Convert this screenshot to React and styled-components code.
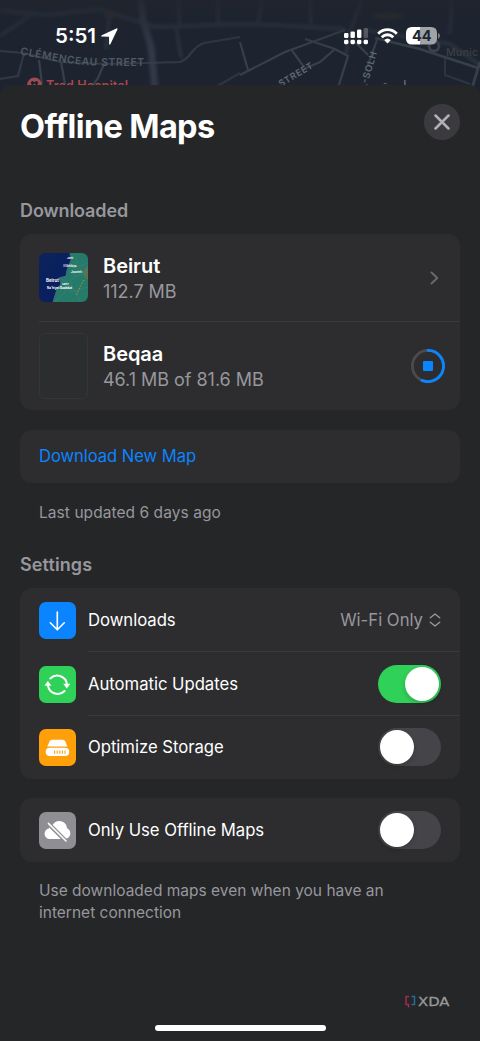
import React, { useState } from 'react'
import styled, { createGlobalStyle } from 'styled-components'

const GlobalStyle = createGlobalStyle`
    * { box-sizing: border-box; }
    body {
        margin: 0;
        background-color: #1d2430;
        font-family: Inter, "Liberation Sans", sans-serif;
        color: #fff;
    }
    svg { display: block; flex-shrink: 0; }
`
const Phone = styled.div`
    display: flex;
    flex-direction: column;
    position: relative;
    width: 480px;
    height: 1041px;
    overflow: hidden;
`
const MapBackground = styled.svg`
    position: absolute;
    top: 0;
    left: 0;
`
const StatusBar = styled.div`
    display: flex;
    position: relative;
    align-items: center;
    justify-content: space-between;
    height: 85px;
    padding: 0 40px 13px 55px;
`
const StatusGroup = styled.div`
    display: flex;
    align-items: center;
    gap: ${(props) => props.$gap}px;
`
const Time = styled.span`
    font-size: 20.5px;
    font-weight: 600;
    line-height: 24px;
    width: 42px;
    white-space: nowrap;
`
const Sheet = styled.div`
    display: flex;
    flex: 1;
    position: relative;
    flex-direction: column;
    padding: 19px 20px 10px;
    background-color: #252628;
    border-radius: 11px 11px 0 0;
`
const Header = styled.div`
    display: flex;
    justify-content: space-between;
    height: 95px;
`
const Title = styled.h1`
    margin: 2px 0 0;
    font-size: 32.5px;
    font-weight: 700;
    line-height: 42px;
    letter-spacing: -0.65px;
`
const CloseButton = styled.button`
    display: flex;
    align-items: center;
    justify-content: center;
    width: 36px;
    height: 36px;
    padding: 0;
    border: none;
    border-radius: 50%;
    background-color: #3b3b3f;
`
const SectionTitle = styled.h2`
    margin: ${(props) => props.$top || 0}px 0 0;
    font-size: 18px;
    font-weight: 600;
    line-height: 24px;
    letter-spacing: ${(props) => props.$spacing}px;
    color: #97979d;
`
const Card = styled.div`
    display: flex;
    flex-direction: column;
    margin-top: ${(props) => props.$top}px;
    padding-left: 19px;
    border-radius: 12px;
    background-color: #2d2d2f;
`
const MapRow = styled.div`
    display: flex;
    align-items: center;
    height: 88px;
    padding-right: ${(props) => props.$right}px;
    border-bottom: ${(props) => (props.$last ? 'none' : '1px solid #39393b')};
`
const EmptyThumb = styled.div`
    width: 49px;
    height: 66px;
    border: 1px solid #333537;
    border-radius: 6px;
    background-color: #2b2d2e;
`
const MapInfo = styled.div`
    flex: 1;
    margin-left: 15px;
    padding-top: 1px;
`
const MapName = styled.div`
    font-size: 20px;
    font-weight: 600;
    line-height: 26px;
    letter-spacing: -0.05px;
`
const MapSize = styled.div`
    font-size: 18px;
    line-height: 25px;
    letter-spacing: -0.03px;
    color: #97979d;
`
const LinkButton = styled.button`
    height: 53px;
    padding: 0 0 2px;
    border: none;
    background: none;
    font-family: inherit;
    font-size: 16.6px;
    letter-spacing: -0.05px;
    text-align: left;
    color: #0a84ff;
`
const Note = styled.p`
    margin: ${(props) => props.$margin};
    font-size: 15.5px;
    line-height: 22px;
    letter-spacing: ${(props) => props.$spacing}px;
    white-space: pre-line;
    color: #97979d;
`
const SettingRow = styled.div`
    display: flex;
    align-items: center;
    height: 64px;
    margin-bottom: ${(props) => (props.$tight ? -1 : 0)}px;
`
const IconBox = styled.div`
    display: flex;
    align-items: center;
    justify-content: center;
    width: 37px;
    height: 37px;
    border-radius: 7px;
    background-color: ${(props) => props.$color};
`
const SettingBody = styled.div`
    display: flex;
    flex: 1;
    align-items: center;
    justify-content: space-between;
    height: 100%;
    margin-left: 12px;
    padding-right: 19px;
    border-bottom: ${(props) => (props.$last ? 'none' : '1px solid #39393b')};
`
const SettingName = styled.span`
    font-size: 16.7px;
    letter-spacing: -0.03px;
`
const Picker = styled.span`
    display: flex;
    align-items: center;
    gap: 6px;
    font-size: 16.7px;
    color: #97979d;
`
const Switch = styled.button`
    display: flex;
    align-items: center;
    justify-content: ${(props) => (props.$on ? 'flex-end' : 'flex-start')};
    width: 63px;
    height: 38px;
    padding: 0 2px;
    border: none;
    border-radius: 19px;
    background-color: ${(props) => (props.$on ? '#30d158' : '#454549')};
`
const Knob = styled.span`
    width: 34px;
    height: 34px;
    border-radius: 50%;
    background-color: #fff;
    box-shadow: 0 2px 5px rgba(0, 0, 0, 0.2);
`
const Footer = styled.div`
    display: flex;
    flex-direction: column;
    align-items: center;
    margin-top: auto;
`
const Brand = styled.div`
    align-self: flex-end;
    height: 16px;
    margin: 0 10px 16px 0;
`
const HomeIndicator = styled.div`
    width: 171px;
    height: 6px;
    border-radius: 3px;
    background-color: #fff;
`

const StreetMap = () => (
    <MapBackground width="480" height="100" viewBox="0 0 480 100">
        <defs>
            <filter id="soft"><feGaussianBlur stdDeviation="1.6" /></filter>
            <filter id="softer"><feGaussianBlur stdDeviation="0.5" /></filter>
            <linearGradient id="shade" x1="0" y1="0" x2="0" y2="1">
                <stop offset="0" stopColor="#20242c" stopOpacity="0.75" />
                <stop offset="0.5" stopColor="#1d2430" stopOpacity="0" />
            </linearGradient>
        </defs>
        <rect width="480" height="100" fill="#1d2430" />
        <g fill="none" stroke="#2c3541" strokeWidth="3" filter="url(#soft)">
            <path d="M0 10L45 15L100 9L140 22L155 27L240 24L275 25L345 29" strokeWidth="4" />
            <path d="M141 0L143 20L151 47L155 90" strokeWidth="7" stroke="#303946" />
            <path d="M156 27L176 26L181 58" />
            <path d="M0 36L35 12M218 0V26M178 0L180 28M262 0L258 23M310 0L311 24M362 0L351 29" />
            <path d="M110 10L106 49M366 30L450 44L480 65M350 29L346 55M452 0L450 34" />
        </g>
        <g fill="none" stroke="#36404c" strokeWidth="2.2" filter="url(#softer)">
            <path d="M0 51L24 53L18 76L0 79M24 53L60 62L105 64L145 63L180 62C192 58 190 48 204 43L240 37" opacity="0.75" />
            <path d="M39 60L42 84M61 62L65 84M104 64L98 78L91 88" />
            <path d="M240 75L285 52L345 30M291 49L304 67M304 69L320 62L335 49L348 56L338 88M335 49L305 39" />
            <path d="M240 42L248 70M354 41L368 55M378 37L368 65" />
            <path d="M375 38L420 49L478 68M480 62L472 88" strokeWidth="2.8" />
            <path d="M214 88L240 73M445 57V75L470 84" opacity="0.6" />
        </g>
        <g fontFamily="Inter, sans-serif" fontWeight="600">
            <path id="clemenceau" d="M20 54.5C48 59 70 65.5 100 65.5H150" fill="none" />
            <text fill="#505a66" fontSize="10.3">
                <textPath href="#clemenceau" textLength="125">CLÉMENCEAU STREET</textPath>
            </text>
            <text x="281" y="87" transform="rotate(-31 281 87)" fill="#606a75" fontSize="9" textLength="38">STREET</text>
            <text x="366" y="89" transform="rotate(-73 366 89)" fill="#606a75" fontSize="9.5" textLength="38">L-SOLH</text>
            <circle cx="34.5" cy="85" r="7.5" fill="#a14a4d" />
            <path d="M31 83H38M32.5 81V86M36.5 81V86" stroke="#1d2430" strokeWidth="1.8" />
            <text x="46" y="90" fill="#ad464a" fontSize="12.5" textLength="82">Trad Hospital</text>
            <g fill="#727983" fontSize="13" fontFamily="DejaVu Sans">
                <text x="382" y="90">ة</text>
                <text x="403" y="90" fontWeight="400">ا</text>
            </g>
            <circle cx="434" cy="46" r="5" fill="none" stroke="#3b424c" strokeWidth="3" />
            <text x="446" y="56" fill="#3b3d41" fontSize="10.5" textLength="32">Munic</text>
        </g>
        <ellipse cx="388" cy="16" rx="15" ry="3.5" fill="#2f2d2f" filter="url(#soft)" />
        <ellipse cx="110" cy="15" rx="6" ry="4" fill="#352d2e" filter="url(#soft)" />
        <rect width="480" height="100" fill="url(#shade)" />
    </MapBackground>
)

const LocationIcon = () => (
    <svg width="17" height="17" viewBox="0 0 17 17">
        <path d="M15.4.4L.8 7.2C-.3 7.7 0 8.6.9 8.6L8 8.7L8.1 15.8C8.1 16.8 9.1 17 9.5 16.1L16.4 1.5C16.8.6 16.2 0 15.4.4Z" fill="#fff" />
    </svg>
)

const SignalIcon = () => (
    <svg width="24" height="18" viewBox="0 0 24 18" fill="#fff">
        <rect x="0" y="6" width="4.4" height="5" rx="1.2" />
        <rect x="6.5" y="4.5" width="4.4" height="6.5" rx="1.2" />
        <rect x="13" y="2.5" width="4.4" height="8.5" rx="1.2" />
        <rect x="19.6" y="1" width="4.4" height="10" rx="1.2" opacity="0.23" />
        {[0, 6.5, 13, 19.6].map((x) => <rect key={x} x={x} y="12.8" width="4.4" height="4.4" rx="1.4" />)}
    </svg>
)

const WifiIcon = () => (
    <svg width="21" height="16" viewBox="0 0 21 16" fill="none" stroke="#fff" strokeWidth="2.8">
        <path d="M1.2 5.7C6.4.3 14.6.3 19.8 5.7" />
        <path d="M4.7 9.2C8 5.9 13 5.9 16.3 9.2" />
        <path d="M7.2 12.1Q10.5 9.1 13.8 12.1L10.5 15.4Z" fill="#fff" stroke="none" />
    </svg>
)

const BatteryIcon = () => (
    <svg width="34" height="18" viewBox="0 0 34 18">
        <path d="M6 0H14V17.5H6Q0 17.5 0 11.5V6Q0 0 6 0Z" fill="#fff" />
        <path d="M14 0H25Q31 0 31 6V11.5Q31 17.5 25 17.5H14Z" fill="#a1a3a6" />
        <path d="M32 6Q34 6.5 34 8.8Q34 11 32 11.8Z" fill="#7d8186" />
        <text x="15.8" y="14" textAnchor="middle" fontFamily="Inter, sans-serif" fontSize="14.5" fontWeight="700" fill="#202631">44</text>
    </svg>
)

const BeirutThumb = () => (
    <svg width="49" height="49" viewBox="0 0 49 49">
        <defs>
            <clipPath id="thumb"><rect width="49" height="49" rx="6" /></clipPath>
            <linearGradient id="sea" x1="0" y1="0" x2="1" y2="1">
                <stop offset="0" stopColor="#0d235b" />
                <stop offset="1" stopColor="#061c63" />
            </linearGradient>
        </defs>
        <g clipPath="url(#thumb)">
            <rect width="49" height="49" fill="url(#sea)" />
            <path d="M31 0L32 7L28 17L27 23L20 25L22 31L18 36L14 49H49V0Z" fill="#267a68" />
            <path d="M44 18L49 13V27L45 23Z" fill="#5d7255" />
            <path d="M35 0L39 9L34 15L49 10M31 19L38 23L49 18M22 31L31 29L37 22M16 49L27 38L24 29M20 25L32 31L41 48M30 39L49 34" fill="none" stroke="#397f86" strokeWidth="0.7" />
            <path d="M45 27L41 34L37 43" fill="none" stroke="#a49a43" strokeWidth="1" strokeDasharray="1.5 1.5" />
            <path d="M31 0L32 7L28 17L27 23L20 25L22 31L18 36L14 49" fill="none" stroke="#466f8a" strokeWidth="0.8" />
            <g fill="#fff" fontFamily="Inter, sans-serif" fontWeight="700">
                <text x="28" y="5.9" fontSize="2.6">Jbeil</text>
                <text x="24.5" y="13.9" fontSize="2.8" textLength="13" lengthAdjust="spacingAndGlyphs">El Bekfaiya</text>
                <text x="32" y="20.2" fontSize="2.9" textLength="11" lengthAdjust="spacingAndGlyphs">Jounieh</text>
                <text x="7" y="29" fontSize="4.3" textLength="12.8" lengthAdjust="spacingAndGlyphs">Beirut</text>
                <text x="23" y="31.9" fontSize="2.4">Aaley</text>
                <text x="8" y="35.9" fontSize="3.5" textLength="25" lengthAdjust="spacingAndGlyphs">Na'hiyet Baabdat</text>
            </g>
        </g>
    </svg>
)

const ProgressRing = () => (
    <svg width="34" height="34" viewBox="0 0 34 34" fill="none">
        <circle cx="17" cy="17" r="15.6" stroke="#4b4b4e" strokeWidth="2.8" />
        <path d="M17 1.4A15.6 15.6 0 1 1 10.9 31.4" stroke="#0a84ff" strokeWidth="2.8" strokeLinecap="round" />
        <rect x="12" y="12" width="10" height="10" rx="1" fill="#0a84ff" />
    </svg>
)

const ArrowDownIcon = () => (
    <svg width="37" height="37" viewBox="0 0 37 37" fill="none" stroke="#fff" strokeWidth="1.6" strokeLinecap="round" strokeLinejoin="round">
        <path d="M18.3 10V27.5M11.3 20.8L18.3 27.8L25.3 20.8" />
    </svg>
)

const RefreshIcon = () => (
    <svg width="37" height="37" viewBox="0 0 37 37">
        <g fill="none" stroke="#fff" strokeWidth="2" strokeLinecap="round">
            <path d="M11.3 12.5A9.8 9.8 0 0 1 28 18.5" />
            <path d="M25.6 25A9.8 9.8 0 0 1 8.9 18.7" />
        </g>
        <path d="M5.8 19.5L8.9 15.2L12.1 19.5ZM24.6 17.9H31L27.8 22.3Z" fill="#fff" stroke="#fff" strokeWidth="0.4" strokeLinejoin="round" />
    </svg>
)

const DriveIcon = () => (
    <svg width="37" height="37" viewBox="0 0 37 37">
        <path d="M12.9 10.7H23.8Q25.4 10.7 26.1 12.2L28.4 17.6H8.3L10.7 12.2Q11.4 10.7 12.9 10.7Z" fill="#fff" />
        <rect x="6.7" y="18.8" width="23.5" height="8.3" rx="4.1" fill="#fff" />
        <path d="M15.6 21.5V24.8M18.2 21.5V24.8M20.8 21.5V24.8M23.4 21.5V24.8M26 21.5V24.8" stroke="#ff9f0a" strokeWidth="1.1" />
    </svg>
)

const CloudOffIcon = () => (
    <svg width="37" height="37" viewBox="0 0 37 37">
        <path d="M11.5 27C7.9 27 5.6 24.6 5.6 21.7C5.6 18.8 7.5 17 9.9 16.5C9.7 14 11.4 12.5 13.7 12.9C15.1 10.4 17.5 9 20.2 9C24.4 9 27.8 12 28 16.3C30 17 31.3 19 31.3 21.2C31.3 24.5 28.8 27 25.5 27Z" fill="#fff" />
        <path d="M9 11.2L27.8 29.9" stroke="#8e8e93" strokeWidth="4.2" />
        <path d="M9.4 11.4L27 29" stroke="#fff" strokeWidth="1.5" strokeLinecap="round" />
    </svg>
)

const BrandLogo = () => (
    <svg width="45" height="16" viewBox="0 0 45 16">
        <g fill="none" strokeWidth="1.5">
            <path d="M4 3.5H1V11.5H3.5V14.5" stroke="#a52a4d" />
            <path d="M6.5 3.5H9.5V11.5H6.5" stroke="#276d91" />
        </g>
        <text x="13" y="13" fontFamily="DejaVu Sans, sans-serif" fontSize="13" fill="#98989a" stroke="#98989a" strokeWidth="0.3" textLength="31.5" lengthAdjust="spacingAndGlyphs">XDA</text>
    </svg>
)

const Toggle = ({ defaultOn = false }) => {
    const [on, setOn] = useState(defaultOn)
    return (
        <Switch $on={on} onClick={() => setOn(!on)}>
            <Knob />
        </Switch>
    )
}

const Setting = ({ icon, color, name, last, tight, children }) => (
    <SettingRow $tight={tight}>
        <IconBox $color={color}>{icon}</IconBox>
        <SettingBody $last={last}>
            <SettingName>{name}</SettingName>
            {children}
        </SettingBody>
    </SettingRow>
)

const App = () => {
    return (
        <>
            <GlobalStyle />
            <Phone>
                <StreetMap />
                <StatusBar>
                    <StatusGroup $gap={4}>
                        <Time>5:51</Time>
                        <LocationIcon />
                    </StatusGroup>
                    <StatusGroup $gap={8.5}>
                        <SignalIcon />
                        <WifiIcon />
                        <BatteryIcon />
                    </StatusGroup>
                </StatusBar>
                <Sheet>
                    <Header>
                        <Title>Offline Maps</Title>
                        <CloseButton>
                            <svg width="16" height="16" viewBox="0 0 16 16" stroke="#b0b0b6" strokeWidth="2.5" strokeLinecap="round">
                                <path d="M1.5 1.5L14.5 14.5M14.5 1.5L1.5 14.5" />
                            </svg>
                        </CloseButton>
                    </Header>

                    <SectionTitle $spacing={-0.1}>Downloaded</SectionTitle>
                    <Card $top={11}>
                        <MapRow $right={21}>
                            <BeirutThumb />
                            <MapInfo>
                                <MapName>Beirut</MapName>
                                <MapSize>112.7 MB</MapSize>
                            </MapInfo>
                            <svg width="9" height="14" viewBox="0 0 9 14" fill="none" stroke="#69696d" strokeWidth="2" strokeLinecap="round" strokeLinejoin="round">
                                <path d="M1.5 1.5L7.3 7L1.5 12.5" />
                            </svg>
                        </MapRow>
                        <MapRow $right={15} $last>
                            <EmptyThumb />
                            <MapInfo>
                                <MapName>Beqaa</MapName>
                                <MapSize>46.1 MB of 81.6 MB</MapSize>
                            </MapInfo>
                            <ProgressRing />
                        </MapRow>
                    </Card>

                    <Card $top={20}>
                        <LinkButton>Download New Map</LinkButton>
                    </Card>
                    <Note $margin="19px 19px 0" $spacing={0.06}>Last updated 6 days ago</Note>

                    <SectionTitle $top={29} $spacing={0.1}>Settings</SectionTitle>
                    <Card $top={11}>
                        <Setting icon={<ArrowDownIcon />} color="#0a84ff" name="Downloads">
                            <Picker>
                                Wi-Fi Only
                                <svg width="12" height="14" viewBox="0 0 12 14" fill="none" stroke="#97979d" strokeWidth="1.4" strokeLinecap="round" strokeLinejoin="round">
                                    <path d="M1.3 4.8L6 1L10.7 4.8M1.3 9.2L6 13L10.7 9.2" />
                                </svg>
                            </Picker>
                        </Setting>
                        <Setting icon={<RefreshIcon />} color="#30d158" name="Automatic Updates" tight>
                            <Toggle defaultOn />
                        </Setting>
                        <Setting icon={<DriveIcon />} color="#ff9f0a" name="Optimize Storage" last>
                            <Toggle />
                        </Setting>
                    </Card>

                    <Card $top={19}>
                        <Setting icon={<CloudOffIcon />} color="#8e8e93" name="Only Use Offline Maps" last>
                            <Toggle />
                        </Setting>
                    </Card>
                    <Note $margin="18px 19px 0" $spacing={0}>
                        {'Use downloaded maps even when you have an\ninternet connection'}
                    </Note>

                    <Footer>
                        <Brand>
                            <BrandLogo />
                        </Brand>
                        <HomeIndicator />
                    </Footer>
                </Sheet>
            </Phone>
        </>
    )
}

export default App
